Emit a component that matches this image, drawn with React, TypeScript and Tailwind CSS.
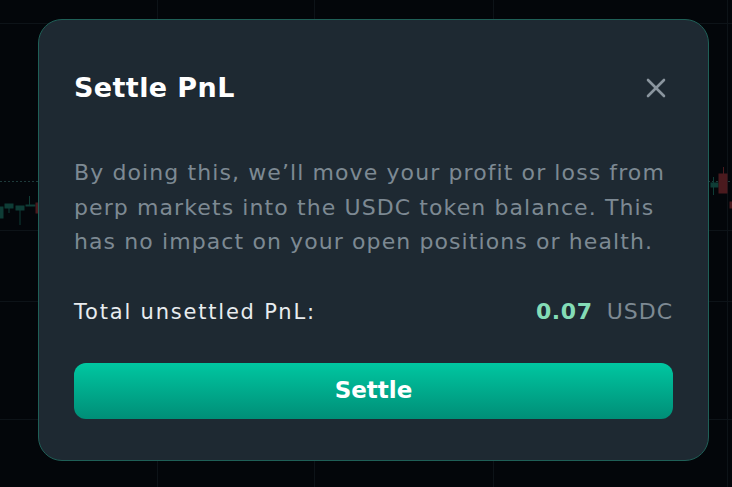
import React from 'react';

function ChartBackdrop() {
  return (
    <svg className="absolute inset-0" width="732" height="487" viewBox="0 0 732 487">
      {/* grid */}
      <g stroke="#0d1318" strokeWidth="1">
        <line x1="0" y1="23.5" x2="732" y2="23.5" />
        <line x1="0" y1="301.5" x2="732" y2="301.5" />
        <line x1="0" y1="419.5" x2="732" y2="419.5" />
        <line x1="0" y1="230.5" x2="732" y2="230.5" />
        <line x1="157.5" y1="0" x2="157.5" y2="487" />
        <line x1="314.5" y1="0" x2="314.5" y2="487" />
        <line x1="493.5" y1="0" x2="493.5" y2="487" />
        <line x1="727.5" y1="0" x2="727.5" y2="487" />
      </g>
      <line x1="0" y1="181.5" x2="732" y2="181.5" stroke="#1e3a3a" strokeDasharray="2 2" />
      {/* candles */}
      <g fill="#0f3d36" stroke="#0f3d36">
        <rect x="0" y="207" width="3" height="11" />
        <rect x="5" y="204" width="8" height="4" />
        <line x1="9" y1="204" x2="9" y2="213" />
        <rect x="16" y="206" width="8" height="4" />
        <line x1="20" y1="206" x2="20" y2="225" />
        <line x1="29.5" y1="196" x2="29.5" y2="205" />
        <rect x="26" y="205" width="9" height="1" />
        <rect x="711" y="183" width="7" height="4" />
        <line x1="713.5" y1="177" x2="713.5" y2="195" />
      </g>
      <g fill="#4a1a1e" stroke="#4a1a1e">
        <rect x="36" y="203" width="2" height="10" />
        <rect x="719" y="174" width="8" height="19" />
        <line x1="723.5" y1="167" x2="723.5" y2="174" />
        <rect x="730" y="202" width="2" height="6" />
      </g>
    </svg>
  );
}

export default function App() {
  return (
    <div
      className="relative w-[732px] h-[487px] overflow-hidden bg-[#03060a]"
      style={{ fontFamily: '"DejaVu Sans", "Noto Sans", sans-serif' }}
    >
      <ChartBackdrop />
      <div className="relative pt-[19px] pl-[38px]">
        <div className="w-[671px] h-[442px] rounded-[24px] border border-[#1f5f57] bg-[#1e2932] pt-[50px] pl-[35px] pr-[35px]">
          <div className="flex items-center justify-between">
            <h2 className="text-[27px] leading-[36px] font-semibold text-white tracking-[0.4px]">Settle PnL</h2>
            <button className="mr-[7px] text-[#8a959e]">
              <svg width="20" height="20" viewBox="0 0 20 20" fill="none" stroke="currentColor" strokeWidth="2.6" strokeLinecap="round">
                <line x1="2" y1="2" x2="18" y2="18" />
                <line x1="18" y1="2" x2="2" y2="18" />
              </svg>
            </button>
          </div>
          <p className="mt-[50px] text-[22px] leading-[34.5px] text-[#7d8993] tracking-[1.1px]">
            By doing this, we’ll move your profit or loss from perp markets into the USDC token balance. This has no impact on your open positions or health.
          </p>
          <div className="mt-[37px] flex items-center justify-between text-[21px] leading-[30px]">
            <span className="text-[#e8ecef] tracking-[1.8px]">Total unsettled PnL:</span>
            <span className="flex items-center gap-[14px]">
              <span className="font-bold text-[#84dcb6] text-[22px] tracking-[0.6px]">0.07</span>
              <span className="text-[#7d8993] text-[22px] tracking-[1px]">USDC</span>
            </span>
          </div>
          <button className="mt-[36px] w-full h-[56px] rounded-[12px] bg-gradient-to-b from-[#00c7a1] to-[#008e77] text-white text-[23px] font-bold">
            Settle
          </button>
        </div>
      </div>
    </div>
  );
}
